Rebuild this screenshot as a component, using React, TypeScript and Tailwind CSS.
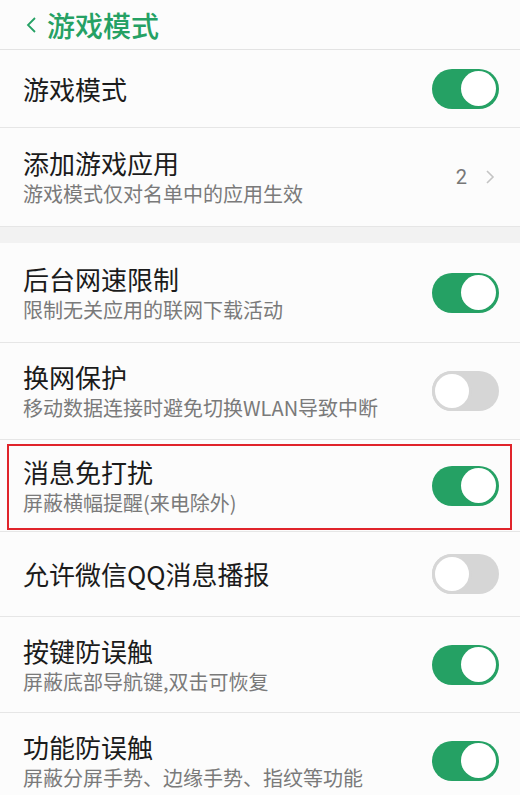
import React from "react";

interface Item {
  title: string;
  desc?: string;
  on?: boolean;
  count?: number;
  h: string;
  marked?: boolean;
}

const GREEN = "bg-[#25a164]";

function Toggle({ on }: { on: boolean }) {
  return on ? (
    <div className={`w-[67px] h-[40px] rounded-full ${GREEN} flex items-center justify-end px-[3px] shrink-0`}>
      <div className="w-[35px] h-[35px] rounded-full bg-white" />
    </div>
  ) : (
    <div className="w-[67px] h-[40px] rounded-full bg-[#d6d6d6] flex items-center justify-start shrink-0">
      <div className="w-[40px] h-[40px] rounded-full bg-white border-[3px] border-[#d6d6d6]" />
    </div>
  );
}

function Row({ item, last }: { item: Item; last?: boolean }) {
  return (
    <div className={`relative flex items-center pl-[23px] pr-[21px] ${item.h} ${last ? "" : "border-b border-[#e6e6e6]"}`}>
      <div className="flex-1 flex flex-col justify-center">
        <div className="text-[26px] leading-[32px] text-[#1b1b1b]">{item.title}</div>
        {item.desc && <div className="text-[20px] leading-[26px] mt-[2px] text-[#7a7a7a]">{item.desc}</div>}
      </div>
      {item.count !== undefined ? (
        <div className="flex items-center gap-[18px] pr-[4px]">
          <span className="text-[20px] text-[#777]" style={{ fontFamily: "Roboto, sans-serif" }}>{item.count}</span>
          <svg width="10" height="16" viewBox="0 0 10 16" fill="none" stroke="#c4c4c4" strokeWidth="1.6">
            <polyline points="2,2 8,8 2,14" />
          </svg>
        </div>
      ) : (
        <Toggle on={!!item.on} />
      )}
      {item.marked && (
        <div className="absolute left-[7px] right-[8px] top-[4px] bottom-[1px] border-[2.5px] border-[#e0242b] pointer-events-none" />
      )}
    </div>
  );
}

const top: Item[] = [
  { title: "游戏模式", on: true, h: "h-[78px]" },
  { title: "添加游戏应用", desc: "游戏模式仅对名单中的应用生效", count: 2, h: "h-[98px]" },
];

const rest: Item[] = [
  { title: "后台网速限制", desc: "限制无关应用的联网下载活动", on: true, h: "h-[100px]" },
  { title: "换网保护", desc: "移动数据连接时避免切换WLAN导致中断", on: false, h: "h-[97px]" },
  { title: "消息免打扰", desc: "屏蔽横幅提醒(来电除外)", on: true, h: "h-[92px]", marked: true },
  { title: "允许微信QQ消息播报", on: false, h: "h-[85px]" },
  { title: "按键防误触", desc: "屏蔽底部导航键,双击可恢复", on: true, h: "h-[96px]" },
  { title: "功能防误触", desc: "屏蔽分屏手势、边缘手势、指纹等功能", on: true, h: "h-[96px]" },
];

export default function App() {
  return (
    <div
      className="w-[520px] h-[795px] overflow-hidden bg-[#fcfcfc]"
      style={{ fontFamily: '"Noto Sans CJK SC", "Noto Sans", sans-serif' }}
    >
      {/* header */}
      <div className="h-[50px] flex items-center pl-[26px] border-b border-[#e3e3e3]">
        <svg width="11" height="18" viewBox="0 0 11 18" fill="none" stroke="#25a164" strokeWidth="1.8">
          <polyline points="9,2 2,9 9,16" />
        </svg>
        <span className="ml-[10px] text-[28px] leading-none text-[#25a164] font-medium">游戏模式</span>
      </div>

      {top.map((it, i) => (
        <Row key={i} item={it} last={i === top.length - 1} />
      ))}

      <div className="h-[17px] bg-[#f2f2f2] border-t border-[#e6e6e6]" />

      {rest.map((it, i) => (
        <Row key={i} item={it} />
      ))}
    </div>
  );
}
